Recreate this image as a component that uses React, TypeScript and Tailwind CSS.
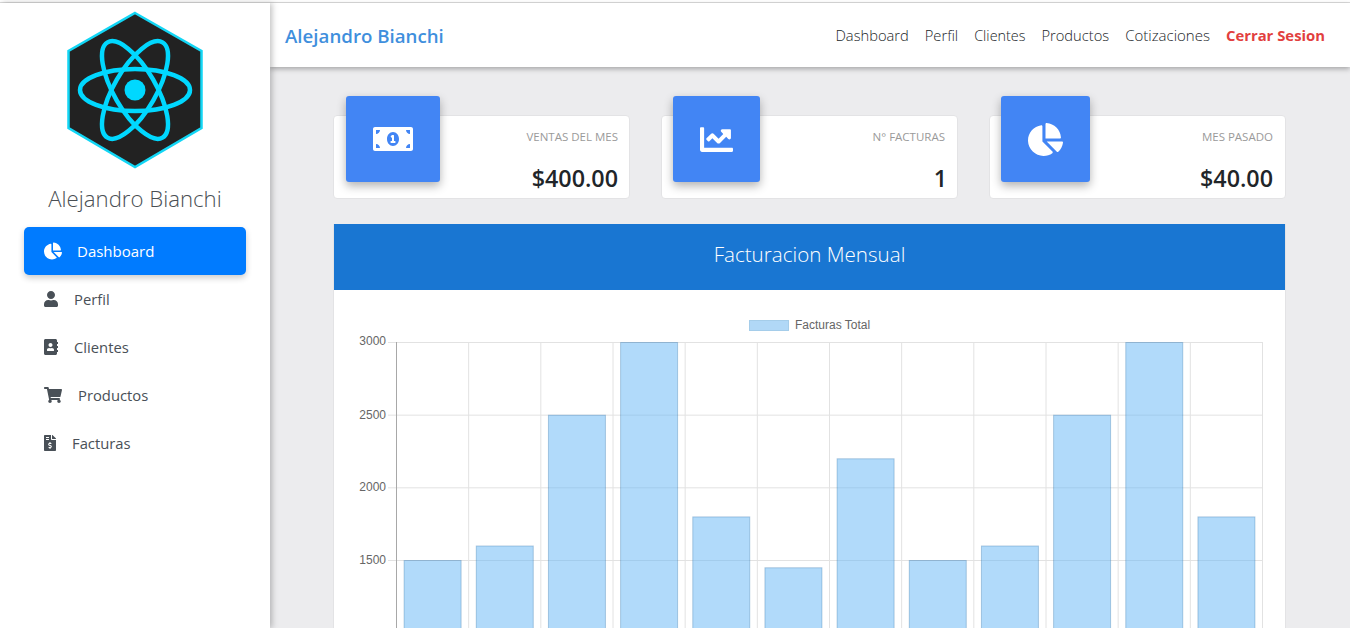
import React from "react";
import { FaChartPie, FaUser, FaAddressBook, FaShoppingCart, FaFileInvoiceDollar, FaMoneyBillAlt, FaChartLine } from "react-icons/fa";

const font = "[font-family:'Open_Sans','Noto_Sans',sans-serif]";

function Logo() {
  return (
    <svg width="140" height="160" viewBox="0 0 140 160" className="block">
      <polygon points="70,3 136.5,41 136.5,118 70,157 3.5,118 3.5,41" fill="#222222" stroke="#12d6f5" strokeWidth="2.5" />
      <g fill="none" stroke="#00d8ff" strokeWidth="4.5">
        <ellipse cx="70" cy="80" rx="55" ry="21" />
        <ellipse cx="70" cy="80" rx="55" ry="21" transform="rotate(60 70 80)" />
        <ellipse cx="70" cy="80" rx="55" ry="21" transform="rotate(-60 70 80)" />
      </g>
      <circle cx="70" cy="80" r="10.5" fill="#00d8ff" />
    </svg>
  );
}

const nav = [
  { label: "Perfil", Icon: FaUser, w: "w-[14px]" },
  { label: "Clientes", Icon: FaAddressBook, w: "w-[14px]" },
  { label: "Productos", Icon: FaShoppingCart, w: "w-[18px]" },
  { label: "Facturas", Icon: FaFileInvoiceDollar, w: "w-[12px]" },
];

function Sidebar() {
  return (
    <aside className="w-[270px] shrink-0 bg-white shadow-[2px_0_6px_rgba(0,0,0,0.25)] relative z-20 flex flex-col">
      <div className="flex justify-center pt-[7px]">
        <Logo />
      </div>
      <div className="text-center text-[22.2px] font-light leading-[32px] text-[#4a4f54] mt-[13px]">Alejandro Bianchi</div>
      <div className="mt-[12px] mx-[24px] flex flex-col">
        <div className="h-[48px] rounded-[5px] bg-[#007bff] shadow-[0_3px_6px_rgba(0,0,0,0.2)] flex items-center pl-[20px] gap-[15px] text-white text-[15px] font-medium">
          <FaChartPie size={18} />
          <span>Dashboard</span>
        </div>
        {nav.map(({ label, Icon, w }) => (
          <div key={label} className="h-[48px] flex items-center pl-[20px] gap-[16px] text-[#495057]">
            <Icon size={16} className={`shrink-0 ${w}`} />
            <span className="text-[14.8px]">{label}</span>
          </div>
        ))}
      </div>
    </aside>
  );
}

function Navbar() {
  return (
    <header className="h-[64px] shrink-0 bg-white shadow-[0_2px_5px_rgba(0,0,0,0.3)] relative z-10 flex items-center justify-between pl-[15px] pr-[25px]">
      <div className="text-[18.7px] font-semibold text-[#3f8fdd] mt-[2px]">Alejandro Bianchi</div>
      <nav className="flex items-baseline gap-[16px] text-[14.7px] font-light text-[#212529]">
        <span>Dashboard</span>
        <span>Perfil</span>
        <span className="text-[14.4px]">Clientes</span>
        <span>Productos</span>
        <span className="text-[15px]">Cotizaciones</span>
        <span className="font-bold text-[14.85px] text-[#e23f3f]">Cerrar Sesion</span>
      </nav>
    </header>
  );
}

function Stat({ title, value, Icon, iconSize, box, pad, valueCls }: { title: string; value: string; Icon: React.ComponentType<{ size?: number }>; iconSize: number; box: string; pad: string; valueCls?: string }) {
  return (
    <div className={`relative h-[84px] bg-white border border-[#e3e3e5] rounded-[4px] text-right pt-[12px] ${pad}`}>
      <div className={`absolute -top-[20px] h-[86px] ${box} rounded-[3px] bg-[#4285f4] text-white flex items-center justify-center shadow-[0_4px_10px_rgba(0,0,0,0.3)]`}>
        <Icon size={iconSize} />
      </div>
      <div className="text-[11.5px] leading-[18px] text-[#9a9a9a]">{title}</div>
      <div className={`text-[23.3px] leading-[32px] font-[550] text-[#212529] mt-[16px] ${valueCls ?? ""}`}>{value}</div>
    </div>
  );
}

const values = [1500, 1600, 2500, 3000, 1800, 1450, 2200, 1500, 1600, 2500, 3000, 1800];

function Chart() {
  const left = 62;
  const top = 52;
  const plotW = 866;
  const colW = plotW / 12;
  const unit = 72.67 / 500;
  const yOf = (v: number) => top + (3000 - v) * unit;
  return (
    <svg width="951" height="338" viewBox="0 0 951 338" className="block">
      <rect x="415.5" y="30.5" width="39" height="10" fill="#b1d8f7" stroke="#a5cdea" />
      <text x="461" y="39" fontFamily="'Liberation Sans',sans-serif" fontSize="12" fill="#666">Facturas Total</text>
      {[3000, 2500, 2000, 1500].map((v) => (
        <g key={v}>
          <line x1={left - 8} x2={left + plotW} y1={yOf(v) + 0.5} y2={yOf(v) + 0.5} stroke="#e2e2e2" />
          <text x={left - 10} y={yOf(v) + (v === 3000 ? 3 : 4)} textAnchor="end" fontFamily="'Liberation Sans',sans-serif" fontSize="12" fill="#666">{v}</text>
        </g>
      ))}
      {Array.from({ length: 13 }, (_, i) => (
        <line key={i} x1={left + i * colW + 0.5} x2={left + i * colW + 0.5} y1={top} y2={338} stroke={i === 0 ? "#a8a8a8" : "#e2e2e2"} />
      ))}
      {values.map((v, i) => (
        <rect key={i} x={left + i * colW + 7.6 + 0.5} y={yOf(v) + 0.5} width={57} height={338} fill="rgba(100,181,246,0.5)" stroke="rgba(30,100,160,0.3)" />
      ))}
    </svg>
  );
}

export default function App() {
  return (
    <div className={`h-[628px] w-[1350px] overflow-hidden flex flex-col bg-white ${font}`}>
      <div className="h-[3px] shrink-0 border-b border-[#dcdcdc]" />
      <div className="flex-1 min-h-0 flex">
        <Sidebar />
        <main className="flex-1 min-w-0 flex flex-col bg-[#ececee]">
          <Navbar />
          <div className="pl-[63px] pr-[64px] pt-[48px]">
            <div className="grid grid-cols-3 gap-[31px]">
              <Stat title="VENTAS DEL MES" value="$400.00" Icon={FaMoneyBillAlt} iconSize={40} box="left-[12px] w-[94px]" pad="pr-[11px]" />
              <Stat title="N° FACTURAS" value="1" Icon={FaChartLine} iconSize={33} box="left-[11px] w-[87px]" pad="pr-[12px]" valueCls="-mr-[2px]" />
              <Stat title="MES PASADO" value="$40.00" Icon={FaChartPie} iconSize={35} box="left-[11px] w-[89px]" pad="pr-[12px]" />
            </div>
            <section className="mt-[25px] bg-white border-x border-b border-[#e3e3e5]">
              <div className="h-[66px] bg-[#1976d2] text-white flex items-center justify-center text-[20.6px] font-light pb-[6px]">Facturacion Mensual</div>
              <Chart />
            </section>
          </div>
        </main>
      </div>
    </div>
  );
}
